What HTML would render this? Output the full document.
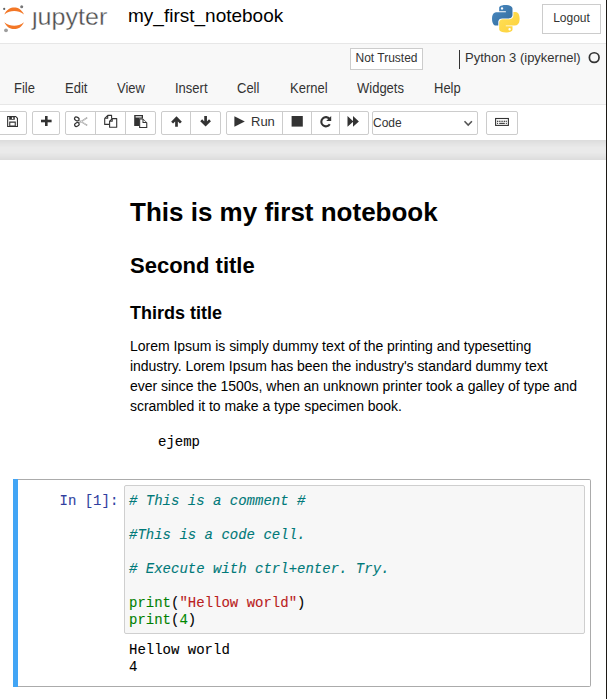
<!DOCTYPE html>
<html><head><meta charset="utf-8">
<style>
html,body{margin:0;padding:0;width:607px;height:699px;overflow:hidden;background:#fff;font-family:"Liberation Sans",sans-serif;font-size:13px;color:#000;}
.a{position:absolute;}
#header{position:absolute;left:0;top:0;width:607px;height:43px;background:#fff;}
#menubar{position:absolute;left:0;top:43px;width:607px;height:62px;box-sizing:border-box;background:#f8f8f8;border-top:1px solid #e7e7e7;border-bottom:1px solid #e7e7e7;}
#toolbar{position:absolute;left:0;top:105px;width:607px;height:35px;background:#fff;}
#gray{position:absolute;left:0;top:140px;width:607px;height:20px;background:#eee;overflow:hidden;}
#content{position:absolute;left:0;top:160px;width:607px;height:539px;background:#fff;}
.btn{position:absolute;top:111px;height:24px;box-sizing:border-box;border:1px solid #ccc;background:#fff;border-radius:2px;}
.grp{position:absolute;top:111px;height:24px;box-sizing:border-box;border:1px solid #ccc;background:#fff;border-radius:2px;display:flex;}
.grp .b{height:22px;box-sizing:border-box;border-left:1px solid #ccc;position:relative;}
.grp .b:first-child{border-left:none;}
.bx{position:absolute;top:111px;height:24px;box-sizing:border-box;border:1px solid #ccc;border-radius:2px;background:#fff;}
.sep{position:absolute;top:112px;height:22px;width:1px;background:#ccc;}
.menu{position:absolute;top:81.2px;font-size:13px;color:#333;line-height:16px;transform:scaleY(1.1);transform-origin:0 12px;}
h1,h2,h3{margin:0;font-weight:bold;}
.mono{font-family:"Liberation Mono",monospace;-webkit-text-stroke:0.1px currentColor;}
</style></head>
<body>
<div id="header">
  <svg class="a" style="left:0;top:0" width="30" height="36" viewBox="0 0 30 36">
    <path d="M4.3 14.5 C7 9.2 10.5 7.6 14.2 7.6 C18 7.6 21.4 9.3 24 14.5 C20.5 11.8 17.6 11 14.2 11 C10.8 11 7.8 11.8 4.3 14.5Z" fill="#f37726"/>
    <path d="M4.3 22.2 C7 27.5 10.5 29.1 14.2 29.1 C18 29.1 21.4 27.4 24 22.2 C20.5 24.9 17.6 25.7 14.2 25.7 C10.8 25.7 7.8 24.9 4.3 22.2Z" fill="#f37726"/>
    <circle cx="21.7" cy="6.7" r="1.5" fill="#767677"/>
    <circle cx="4.2" cy="8.9" r="1.1" fill="#616262"/>
    <circle cx="6" cy="30.3" r="1.9" fill="#9e9e9e"/>
  </svg>
  <div class="a" style="left:32px;top:1.6px;font-size:23px;color:#4e4e4e;line-height:30px;transform-origin:0 0;transform:scaleX(1.09);-webkit-text-stroke:0.3px #fff;">&#x237;upyter</div>
  <div class="a" style="left:128px;top:4px;font-size:19px;color:#000;line-height:24px;">my_first_notebook</div>
  <svg class="a" style="left:491.9px;top:4.9px" width="27.7" height="27.7" viewBox="0 0 256 255"><defs><linearGradient id="pb" x1="0" y1="0" x2="1" y2="1"><stop offset="0" stop-color="#4a8bc4"/><stop offset="1" stop-color="#336a9a"/></linearGradient><linearGradient id="py" x1="0" y1="0" x2="1" y2="1"><stop offset="0" stop-color="#ffe058"/><stop offset="1" stop-color="#fdd13a"/></linearGradient></defs>
    <path fill="url(#pb)" d="M126.916.072c-64.832 0-60.784 28.115-60.784 28.115l.072 29.128h61.868v8.745H41.631S.145 61.355.145 126.77c0 65.417 36.21 63.097 36.21 63.097h21.61v-30.356s-1.165-36.21 35.632-36.21h61.362s34.475.557 34.475-33.319V33.97S194.67.072 126.916.072zM92.802 19.66a11.12 11.12 0 0 1 11.13 11.13 11.12 11.12 0 0 1-11.13 11.13 11.12 11.12 0 0 1-11.13-11.13 11.12 11.12 0 0 1 11.13-11.13z"/>
    <path fill="url(#py)" d="M128.757 254.126c64.832 0 60.784-28.115 60.784-28.115l-.072-29.127H127.6v-8.745h86.441s41.486 4.705 41.486-60.712c0-65.416-36.21-63.096-36.21-63.096h-21.61v30.355s1.165 36.21-35.632 36.21h-61.362s-34.475-.557-34.475 33.32v56.013s-5.235 33.897 62.518 33.897zm34.114-19.586a11.12 11.12 0 0 1-11.13-11.13 11.12 11.12 0 0 1 11.13-11.131 11.12 11.12 0 0 1 11.13 11.13 11.12 11.12 0 0 1-11.13 11.13z"/>
  </svg>
  <div class="a" style="left:542px;top:4px;width:59px;height:30px;box-sizing:border-box;border:1px solid #ccc;font-size:12px;color:#333;text-align:center;line-height:27px;">Logout</div>
</div>

<div id="menubar"></div>
<div class="a" style="left:350px;top:48px;width:73px;height:22px;box-sizing:border-box;border:1px solid #ccc;background:#fff;font-size:12px;color:#333;text-align:center;line-height:19px;">Not Trusted</div>
<div class="a" style="left:459px;top:50px;width:1px;height:19px;background:#333;"></div>
<div class="a" style="left:465px;top:48.5px;font-size:13px;color:#333;line-height:18px;">Python 3 (ipykernel)</div>
<svg class="a" style="left:580px;top:44px" width="26" height="26" viewBox="580 44 26 26"><circle cx="594.2" cy="57.6" r="4.85" fill="none" stroke="#333" stroke-width="1.7"/></svg>
<div class="menu" style="left:14px">File</div>
<div class="menu" style="left:65px">Edit</div>
<div class="menu" style="left:117px">View</div>
<div class="menu" style="left:175px">Insert</div>
<div class="menu" style="left:237px">Cell</div>
<div class="menu" style="left:290px">Kernel</div>
<div class="menu" style="left:357px">Widgets</div>
<div class="menu" style="left:434px">Help</div>

<div id="toolbar"></div>
<div class="bx" style="left:-3px;width:30px"></div>
<div class="bx" style="left:32px;width:28px"></div>
<div class="bx" style="left:65px;width:91px"></div>
<div class="sep" style="left:95px"></div><div class="sep" style="left:125px"></div>
<div class="bx" style="left:161px;width:60px"></div>
<div class="sep" style="left:190px"></div>
<div class="bx" style="left:226px;width:143px"></div>
<div class="sep" style="left:282px"></div><div class="sep" style="left:311px"></div><div class="sep" style="left:339px"></div>
<div class="bx" style="left:372px;width:106px"></div>
<div class="bx" style="left:486px;width:32px"></div>
<div class="a" style="left:251px;top:114px;font-size:13px;line-height:15px;color:#333;">Run</div>
<div class="a" style="left:373px;top:116px;font-size:12px;line-height:15px;color:#333;">Code</div>
<svg class="a" style="left:0;top:0" width="607" height="140" viewBox="0 0 607 140">
 <g fill="#333" stroke="none">
  <!-- save -->
  <path d="M7.1 116 H15.9 L18 118.1 V127 H7.1 Z M8.2 117.1 V125.9 H16.9 V118.6 L15.4 117.1 Z" fill-rule="evenodd"/>
  <path d="M9.2 116.5 H14.8 V119.8 H9.2 Z M11.9 117.3 V119 H13.3 V117.3 Z" fill-rule="evenodd"/>
  <path d="M9.2 121.6 H15.8 V126.5 H9.2 Z M10.3 122.7 V125.5 H14.7 V122.7 Z" fill-rule="evenodd"/>
  <!-- plus -->
  <rect x="45" y="116" width="2.6" height="10"/>
  <rect x="41" y="119.7" width="10.6" height="2.6"/>
  <!-- stop -->
  <rect x="291.6" y="116" width="11.2" height="10.6"/>
  <!-- play -->
  <path d="M234.4 116.2 L244.8 121.45 L234.4 126.7 Z"/>
  <!-- forward -->
  <path d="M347.5 116.1 L353.4 121.45 L347.5 126.8 Z M353 116.1 L358.9 121.45 L353 126.8 Z"/>
  <!-- paste -->
  <path d="M134.2 115.1 H143 V118.6 H139.2 V126.1 H134.2 Z M135.6 116.3 V117.4 H141.7 V116.3 Z" fill-rule="evenodd"/>
  <path d="M139.1 118.5 H142.9 L147.3 122.8 V128 H139.1 Z M140.2 119.6 V126.9 H146.2 V123.1 H142.5 V119.6 Z M143.5 119.9 V122.1 H145.8 Z" fill-rule="evenodd"/>
 </g>
 <g fill="none" stroke="#333">
  <!-- cut -->
  <ellipse cx="76.8" cy="118.9" rx="2.35" ry="1.75" stroke-width="1.2" transform="rotate(28 76.8 118.9)"/>
  <ellipse cx="76.9" cy="124.5" rx="2.35" ry="1.75" stroke-width="1.2" transform="rotate(-28 76.9 124.5)"/>
  <path d="M79 120.2 L87.2 125.4 M79 123.1 L87.2 117.6" stroke-width="1.3" stroke="#999"/>
  <path d="M80 120.6 L86.6 124.9 M80 122.7 L86.6 118.1" stroke-width="0.5" stroke="#fff"/>
  <!-- copy -->
  <path d="M104.7 118.3 L107.8 115.4 H111.6 V118.7 M109.2 124.4 H104.7 V118.3 M107.7 115.6 V118.3 H104.9" stroke-width="1.1" stroke-linejoin="round"/>
  <path d="M109.6 121.2 L112.3 118.6 H116.7 V127.3 H109.6 Z M112.2 118.8 V121.2 H109.8" stroke-width="1.1" stroke-linejoin="round"/>
  <!-- arrows -->
  <path d="M176.5 126.7 V118.5 M172.1 122.6 L176.5 118.2 L180.9 122.6" stroke-width="2.7"/>
  <path d="M205.6 116 V124.2 M201.2 120.2 L205.6 124.6 L210 120.2" stroke-width="2.7"/>
  <!-- repeat -->
  <path d="M329.6 119 A4.6 4.6 0 1 0 329.8 124.2" stroke-width="2.1"/>
  <!-- chevron -->
  <path d="M464.5 121.2 L468.2 125 L471.9 121.2" stroke-width="1.6" stroke="#555"/>
  <!-- keyboard -->
  <rect x="495.6" y="118.5" width="12.8" height="6.9" stroke-width="1.1"/>
 </g>
 <g fill="#333">
  <path d="M331.2 116 V121 H326.2 Z"/>
  <rect x="497.00" y="120.7" width="1.1" height="1.2"/><rect x="498.75" y="120.7" width="1.1" height="1.2"/><rect x="500.50" y="120.7" width="1.1" height="1.2"/><rect x="502.25" y="120.7" width="1.1" height="1.2"/><rect x="504.00" y="120.7" width="1.1" height="1.2"/><rect x="505.75" y="120.7" width="1.1" height="1.2"/>
  <rect x="497.0" y="122.8" width="1.1" height="1.1"/><rect x="499.2" y="122.8" width="5.6" height="1.1"/><rect x="505.8" y="122.8" width="1.1" height="1.1"/>
 </g>
</svg>
<div id="gray"><div style="position:absolute;left:-20px;top:-20px;width:647px;height:20px;box-shadow:0 0 12px 1px rgba(87,87,87,0.2);"></div><div style="position:absolute;left:-20px;top:20px;width:647px;height:20px;box-shadow:0 0 12px 1px rgba(87,87,87,0.2);"></div></div>
<div id="content"></div>

<h1 class="a" style="left:130px;top:197px;font-size:26px;line-height:30px;">This is my first notebook</h1>
<h2 class="a" style="left:130px;top:253px;font-size:22px;line-height:26px;">Second title</h2>
<h3 class="a" style="left:130px;top:302px;font-size:18px;line-height:22px;">Thirds title</h3>
<div class="a" style="left:130px;top:336px;width:470px;font-size:14px;line-height:20px;letter-spacing:-0.03px;">Lorem Ipsum is simply dummy text of the printing and typesetting<br>industry. Lorem Ipsum has been the industry's standard dummy text<br>ever since the 1500s, when an unknown printer took a galley of type and<br>scrambled it to make a type specimen book.</div>
<div class="a mono" style="left:158px;top:434px;font-size:14px;line-height:17px;">ejemp</div>

<div class="a" style="left:13px;top:479px;width:578px;height:208px;box-sizing:border-box;border:1px solid #ababab;border-left:none;border-radius:0 2px 2px 0;"></div>
<div class="a" style="left:13px;top:479px;width:5px;height:208px;background:#42a5f5;"></div>
<div class="a mono" style="left:59.5px;top:492.5px;font-size:14px;line-height:17px;color:#303f9f;">In&nbsp;[1]:</div>
<div class="a" style="left:124px;top:485px;width:461px;height:149px;box-sizing:border-box;border:1px solid #cfcfcf;border-radius:2px;background:#f7f7f7;"></div>
<div class="a mono" style="left:129px;top:493px;font-size:14px;line-height:17px;white-space:pre;"><span style="color:#007979;font-style:italic"># This is a comment #</span>

<span style="color:#007979;font-style:italic">#This is a code cell.</span>

<span style="color:#007979;font-style:italic"># Execute with ctrl+enter. Try.</span>

<span style="color:#008000">print</span>(<span style="color:#ba2121">"Hellow world"</span>)
<span style="color:#008000">print</span>(<span style="color:#008800">4</span>)</div>
<div class="a mono" style="left:129px;top:642px;font-size:14px;line-height:17px;white-space:pre;">Hellow world
4</div>

<div class="a" style="left:606px;top:0;width:1px;height:699px;background:#1c1915;"></div>
</body></html>
